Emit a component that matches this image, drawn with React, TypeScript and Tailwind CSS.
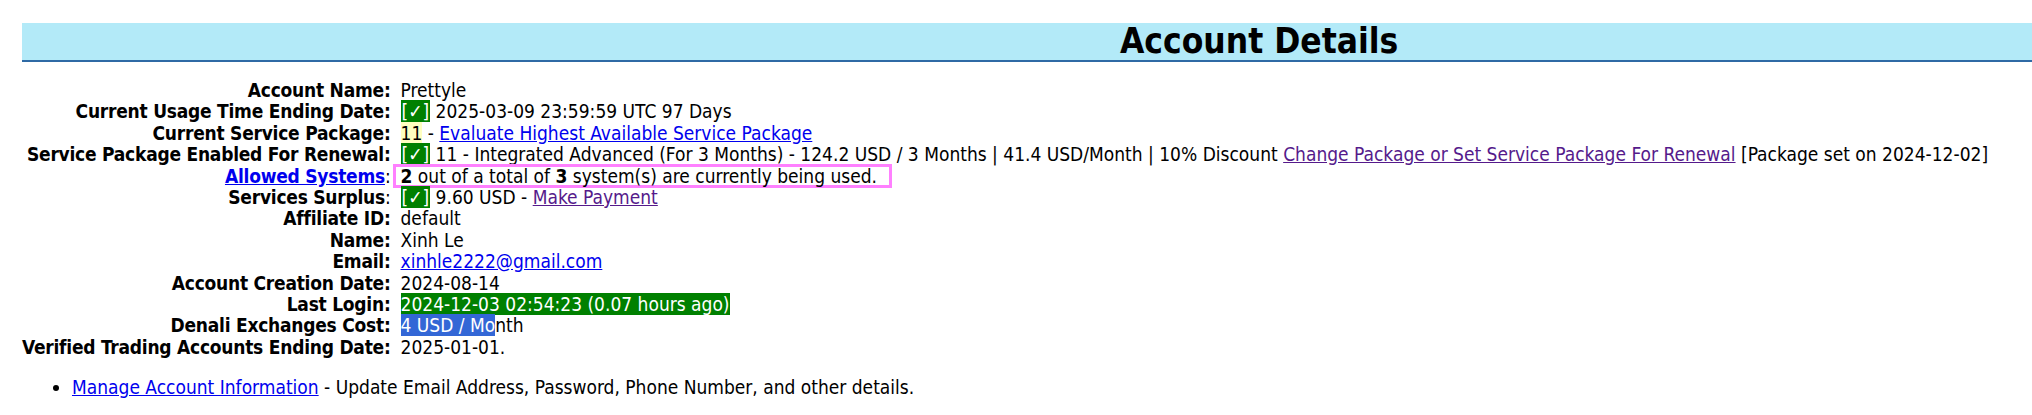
import React from 'react';

const FONT = "font-['DejaVu_Sans_Condensed','DejaVu_Sans',sans-serif]";

function Check() {
  return <span className="bg-[#008000] text-white px-[1px]">[✓]</span>;
}

function Row({ label, children }: { label: React.ReactNode; children: React.ReactNode }) {
  return (
    <>
      <div className="text-right font-bold whitespace-nowrap tracking-[-0.24px]">{label}</div>
      <div className="whitespace-nowrap">{children}</div>
    </>
  );
}

export default function App() {
  return (
    <div className={`${FONT} text-[19px] text-black bg-white min-h-[415px] overflow-hidden`}>
      <div className="pt-[23px] pl-[22px]">
        <div className="bg-[#b3eaf8] border-b-2 border-[#2f6aa5] h-[39px] flex items-center pl-[1098px]">
          <h1 className="text-[35px] font-bold leading-none">Account Details</h1>
        </div>
      </div>

      <div className="pl-[22px] pt-[18px] grid grid-cols-[auto_1fr] gap-x-[10px] leading-[21.4px]">
        <Row label="Account Name:">Prettyle</Row>
        <Row label="Current Usage Time Ending Date:">
          <Check /> 2025-03-09 23:59:59 UTC 97 Days
        </Row>
        <Row label="Current Service Package:">
          <span className="bg-[#ffffc0]">11</span> -{' '}
          <a href="#" className="text-[#0000ee] underline">Evaluate Highest Available Service Package</a>
        </Row>
        <Row label="Service Package Enabled For Renewal:">
          <Check /> 11 - Integrated Advanced (For 3 Months) - 124.2 USD / 3 Months | 41.4 USD/Month | 10% Discount{' '}
          <a href="#" className="text-[#551a8b] underline">Change Package or Set Service Package For Renewal</a> [Package set on 2024-12-02]
        </Row>
        <Row
          label={
            <>
              <a href="#" className="text-[#0000ee] underline">Allowed Systems</a>
              <span className="font-normal">:</span>
            </>
          }
        >
          <span className="inline-block border-[3px] border-[#ff80ff] leading-[18px] pl-[5px] pr-[12px] -ml-[8px] -my-[2px]">
            <b>2</b> out of a total of <b>3</b> system(s) are currently being used.
          </span>
        </Row>
        <Row
          label={
            <>
              Services Surplus<span className="font-normal">:</span>
            </>
          }
        >
          <Check /> 9.60 USD -{' '}
          <a href="#" className="text-[#551a8b] underline">Make Payment</a>
        </Row>
        <Row label="Affiliate ID:">default</Row>
        <Row label="Name:">Xinh Le</Row>
        <Row label="Email:">
          <a href="#" className="text-[#0000ee] underline">xinhle2222@gmail.com</a>
        </Row>
        <Row label="Account Creation Date:">2024-08-14</Row>
        <Row label="Last Login:">
          <span className="bg-[#008000] text-white">2024-12-03 02:54:23 (0.07 hours ago)</span>
        </Row>
        <Row label="Denali Exchanges Cost:">
          <span className="bg-[#3367d6] text-white">4 USD / Mo</span>nth
        </Row>
        <Row label="Verified Trading Accounts Ending Date:">2025-01-01.</Row>
      </div>

      <ul className="list-disc pl-[72px] mt-[15px]">
        <li>
          <a href="#" className="text-[#0000ee] underline">Manage Account Information</a> - Update Email Address,
          Password, Phone Number, and other details.
        </li>
      </ul>
    </div>
  );
}
